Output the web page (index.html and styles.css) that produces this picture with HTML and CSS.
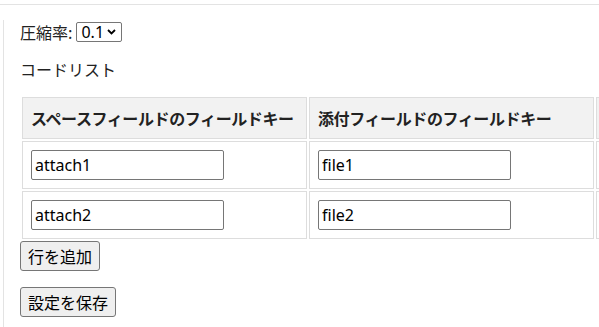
FILE: index.html
```html
<!DOCTYPE html>
<html>
<head>
  <meta charset="utf-8">
  <title>プラグイン設定</title>
  <link rel="stylesheet" href="styles.css">
</head>
<body>
  <div class="topbar"></div>
  <div class="settings">
    <div class="row">
      <label for="ratio">圧縮率:</label>
      <span class="select-wrap">
        <select id="ratio" class="ratio">
          <option>0.1</option>
          <option>0.2</option>
          <option>0.5</option>
        </select>
        <svg class="chevron" width="9" height="6" viewBox="0 0 9 6">
          <path d="M1 1 L4.5 4.5 L8 1" fill="none" stroke="#000" stroke-width="1.8"/>
        </svg>
      </span>
    </div>
    <p class="title">コードリスト</p>
    <table class="code-list">
      <thead>
        <tr>
          <th class="col-space">スペースフィールドのフィールドキー</th>
          <th class="col-file">添付フィールドのフィールドキー</th>
          <th class="col-action"></th>
        </tr>
      </thead>
      <tbody>
        <tr>
          <td><input type="text" class="key" value="attach1"></td>
          <td><input type="text" class="key" value="file1"></td>
          <td></td>
        </tr>
        <tr>
          <td><input type="text" class="key" value="attach2"></td>
          <td><input type="text" class="key" value="file2"></td>
          <td></td>
        </tr>
      </tbody>
    </table>
    <button class="btn">行を追加</button>
    <div class="actions">
      <button class="btn">設定を保存</button>
    </div>
  </div>
</body>
</html>
```

FILE: styles.css
```css
html, body {
  margin: 0;
  overflow: hidden;
}

body {
  font-family: "Noto Sans CJK JP", sans-serif;
  font-size: 16px;
  color: #222;
  background-color: #fff;
}

.topbar {
  height: 4px;
  border-bottom: 1px solid #e3e3e3;
}

.settings {
  margin: 15px 0 0 3px;
  padding-left: 16px;
  border-left: 1px solid #e3e3e3;
  height: 400px;
}

.row {
  display: flex;
  align-items: center;
  height: 24px;
  margin-top: 1px;
  line-height: 24px;
}

.select-wrap {
  position: relative;
  display: inline-block;
  margin-left: 4px;
  height: 20px;
}

.ratio {
  appearance: none;
  -webkit-appearance: none;
  box-sizing: border-box;
  display: block;
  width: 46px;
  height: 20px;
  padding: 0 0 0 4px;
  font-family: "Noto Sans", sans-serif;
  font-size: 16px;
  line-height: 18px;
  border: 1px solid #767676;
  border-radius: 2px;
  background-color: #fff;
  color: #000;
}

.chevron {
  position: absolute;
  right: 6px;
  top: 7px;
  pointer-events: none;
}

.title {
  margin: 13px 0 14px;
  line-height: 24px;
}

.code-list {
  border-collapse: separate;
  border-spacing: 2px;
  table-layout: fixed;
  width: 700px;
}

.code-list th,
.code-list td {
  border: 1px solid #dddddd;
  padding: 8px;
  text-align: left;
}

.code-list th {
  background-color: #f2f2f2;
  font-weight: bold;
  line-height: 24px;
  color: #222;
  white-space: nowrap;
  letter-spacing: -0.4px;
  overflow: hidden;
}

.col-space,
.col-file {
  width: 267px;
}

.key {
  box-sizing: border-box;
  width: 193px;
  height: 30px;
  margin: 0;
  padding: 0 3px;
  font-family: "Noto Sans", sans-serif;
  font-size: 16px;
  border: 1px solid #767676;
  border-radius: 2px;
  color: #000;
}

.btn {
  box-sizing: border-box;
  height: 30px;
  padding: 0 7px;
  font-family: inherit;
  font-size: 16px;
  color: #000;
  background-color: #efefef;
  border: 1px solid #767676;
  border-radius: 3px;
  cursor: pointer;
}

.btn:hover {
  background-color: #e5e5e5;
}

.actions {
  margin-top: 16px;
}
```
